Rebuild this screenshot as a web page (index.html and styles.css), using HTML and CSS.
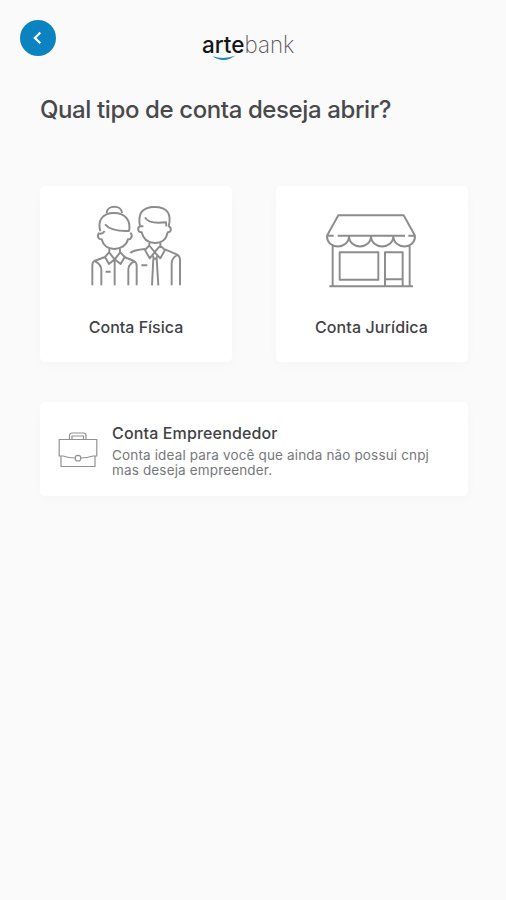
FILE: index.html
```html
<!DOCTYPE html>
<html lang="pt-BR">
<head>
<meta charset="utf-8">
<title>artebank</title>
<link rel="stylesheet" href="styles.css">
</head>
<body>
<header class="topbar">
  <button class="back" aria-label="Voltar">
    <svg width="36" height="36" viewBox="0 0 36 36"><path d="M20.3 12.5 14.8 17.9l5.5 5.4"/></svg>
  </button>
  <svg class="logo" width="96" height="36" viewBox="0 0 96 36">
    <text class="logo-arte" x="1" y="23.5" textLength="42.5" lengthAdjust="spacingAndGlyphs">arte</text>
    <text class="logo-bank" x="43.5" y="23.5" textLength="50" lengthAdjust="spacingAndGlyphs">bank</text>
    <path d="M11.5 27.2Q22.5 35 34.2 26.8Q22.5 30.8 11.5 27.2Z"/>
  </svg>
</header>
<main class="content">
  <h1 class="title">Qual tipo de conta deseja abrir?</h1>
  <div class="types">
    <a class="card type">
      <svg class="line-icon" width="92" height="82" viewBox="30 30 276 246">
        <path d="M80 54C81 29 125 29 126 54M61 109C52 78 66 54 102 54S153 78 147 109M75 88Q94 110 147 108M74 108Q67 119 56 115C50 126 57 134 65 133C69 151 84 162 103 162S140 151 144 133C153 134 160 122 151 113"/>
        <path d="M88 161V173L104 193 120 173V161M87 172 75 186 87 207 104 193 122 207 134 186 121 172M104 194V271M75 186 43 198Q37 201 37 211V271M133 186 162 198Q170 202 170 212V271M45 199Q64 208 64 225V271M163 199Q145 208 145 225V271M77 230H92"/>
        <path d="M180 94C173 58 184 36 224 36S275 58 266 95M195 67Q205 88 258 82L259 94M190 94H180C171 98 173 112 185 112C190 133 203 144 224 144S259 133 263 112C274 112 276 98 266 94"/>
        <path d="M208 144V152L224 171 241 152V144M208 151 195 165 209 190 224 172 241 190 255 165 240 151M151 174Q160 165 195 162M255 163 290 178Q300 183 300 195V271M292 180Q275 189 275 205V271M217 180 222 191H228L234 180M220 191 216 271M230 191 235 271M184 211H202"/>
      </svg>
      <span class="label">Conta Física</span>
    </a>
    <a class="card type">
      <svg class="line-icon store" width="92" height="78" viewBox="33 24 276 234">
        <path d="M36 92 70 31H266L300 92M36 92H56M68 92H270M280 92H300M36 92C34 135 102 135 102 92C102 135 168 135 168 92C168 135 235 135 235 92C235 135 302 135 300 92M53 123V243M284 123V243M43 244H294"/>
        <path d="M74 142H190V224H74ZM210 243V142H263V243M210 223H263"/>
      </svg>
      <span class="label label-wide">Conta Jurídica</span>
    </a>
  </div>
  <a class="card entrepreneur">
    <svg class="case-icon" width="40" height="38" viewBox="0 0 40 38">
      <path d="M11.5 8V4.5Q11.5 2 14 2H25.5Q28 2 28 4.5V8M14 8V5H25.5V8M17.3 27Q11 27 5 25H1.2V8.5H38.8V25H35Q29 27 22.7 27M3 25.5V35.5H37V25.5"/>
      <circle cx="20" cy="27.2" r="2.8"/>
    </svg>
    <div class="info">
      <h2>Conta Empreendedor</h2>
      <p>Conta ideal para você que ainda não possui cnpj<br>mas deseja empreender.</p>
    </div>
  </a>
</main>
</body>
</html>
```
FILE: styles.css
```css
* { box-sizing: border-box; }
body {
  margin: 0;
  min-height: 900px;
  background: #fafafa;
  color: #414244;
  font-family: Inter, "Liberation Sans", sans-serif;
}
.topbar {
  display: grid;
  grid-template-columns: 181px 96px;
  align-items: start;
  padding: 20px 0 0 20px;
  height: 84px;
}
.back {
  width: 36px;
  height: 36px;
  padding: 0;
  border: 0;
  border-radius: 50%;
  background: #0b83c1;
}
.back svg { display: block; }
.back path {
  fill: none;
  stroke: #fff;
  stroke-width: 2.2;
}
.logo { margin-top: 9px; }
.logo text { font-size: 23.5px; }
.logo-arte { font-weight: 500; fill: #151515; }
.logo-bank { font-weight: 200; fill: #555; }
.logo path { fill: #1686c8; }
.content { padding: 0 38px 0 40px; }
.title {
  margin: 10px 0 0;
  height: 92px;
  font-size: 24px;
  line-height: 32px;
  font-weight: 500;
  letter-spacing: -0.39px;
  white-space: nowrap;
  color: #48494b;
}
.types {
  display: grid;
  grid-template-columns: 192px 192px;
  justify-content: space-between;
}
.card {
  background: #fff;
  border-radius: 5px;
  box-shadow: 0 3px 12px rgba(0, 0, 0, 0.025);
}
.type {
  display: flex;
  flex-direction: column;
  align-items: center;
  height: 176px;
  padding-top: 19px;
}
.line-icon {
  fill: none;
  stroke: #8c8c8c;
  stroke-width: 5.8;
  stroke-linejoin: round;
}
.store { margin-top: 8px; }
.label {
  margin-top: auto;
  margin-bottom: 24px;
  font-size: 16px;
  line-height: 22px;
  font-weight: 500;
  white-space: nowrap;
}
.label-wide {
  margin-right: 1px;
  letter-spacing: 0.1px;
}
.entrepreneur {
  display: flex;
  height: 94px;
  margin-top: 40px;
  padding: 20px 18px 0;
}
.case-icon {
  flex: none;
  margin-top: 9px;
  fill: none;
  stroke: #929292;
  stroke-width: 1.2;
}
.info { margin-left: 14px; white-space: nowrap; }
.info h2 {
  margin: 0;
  font-size: 16px;
  line-height: 22px;
  font-weight: 500;
  letter-spacing: 0.15px;
}
.info p {
  margin: 4px 0 0;
  font-size: 13.5px;
  line-height: 15px;
  letter-spacing: 0.15px;
  color: #77787a;
}
```
